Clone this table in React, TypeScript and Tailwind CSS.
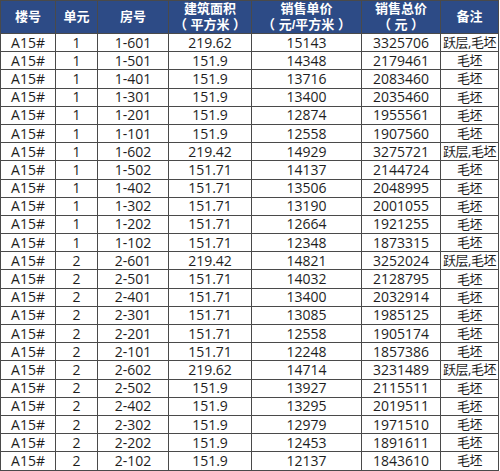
const rows: [string, string, string, string, string, string, string][] = [
  ["A15#", "1", "1-601", "219.62", "15143", "3325706", "跃层,毛坯"],
  ["A15#", "1", "1-501", "151.9", "14348", "2179461", "毛坯"],
  ["A15#", "1", "1-401", "151.9", "13716", "2083460", "毛坯"],
  ["A15#", "1", "1-301", "151.9", "13400", "2035460", "毛坯"],
  ["A15#", "1", "1-201", "151.9", "12874", "1955561", "毛坯"],
  ["A15#", "1", "1-101", "151.9", "12558", "1907560", "毛坯"],
  ["A15#", "1", "1-602", "219.42", "14929", "3275721", "跃层,毛坯"],
  ["A15#", "1", "1-502", "151.71", "14137", "2144724", "毛坯"],
  ["A15#", "1", "1-402", "151.71", "13506", "2048995", "毛坯"],
  ["A15#", "1", "1-302", "151.71", "13190", "2001055", "毛坯"],
  ["A15#", "1", "1-202", "151.71", "12664", "1921255", "毛坯"],
  ["A15#", "1", "1-102", "151.71", "12348", "1873315", "毛坯"],
  ["A15#", "2", "2-601", "219.42", "14821", "3252024", "跃层,毛坯"],
  ["A15#", "2", "2-501", "151.71", "14032", "2128795", "毛坯"],
  ["A15#", "2", "2-401", "151.71", "13400", "2032914", "毛坯"],
  ["A15#", "2", "2-301", "151.71", "13085", "1985125", "毛坯"],
  ["A15#", "2", "2-201", "151.71", "12558", "1905174", "毛坯"],
  ["A15#", "2", "2-101", "151.71", "12248", "1857386", "毛坯"],
  ["A15#", "2", "2-602", "219.62", "14714", "3231489", "跃层,毛坯"],
  ["A15#", "2", "2-502", "151.9", "13927", "2115511", "毛坯"],
  ["A15#", "2", "2-402", "151.9", "13295", "2019511", "毛坯"],
  ["A15#", "2", "2-302", "151.9", "12979", "1971510", "毛坯"],
  ["A15#", "2", "2-202", "151.9", "12453", "1891611", "毛坯"],
  ["A15#", "2", "2-102", "151.9", "12137", "1843610", "毛坯"],
]

const cell = "border-[1.5px] border-[#4a4a4a]"

export default function App() {
  return (
    <div
      className="w-[500px] h-[471px] overflow-hidden bg-white"
      style={{ fontFamily: '"Open Sans", "Noto Sans CJK SC", sans-serif' }}
    >
      <table className="border-collapse table-fixed w-[498px] text-[14px] text-[#1e1e1e] text-center leading-none">
        <colgroup>
          <col className="w-[55px]" />
          <col className="w-[42px]" />
          <col className="w-[71px]" />
          <col className="w-[83px]" />
          <col className="w-[110px]" />
          <col className="w-[79px]" />
          <col className="w-[58px]" />
        </colgroup>
        <thead>
          <tr
            className="h-[33px] bg-[#2d4b86] text-white font-bold text-[13px] leading-[16px]"
            style={{ fontFamily: '"Liberation Sans", "Noto Sans CJK SC", sans-serif' }}
          >
            <th className={`${cell} p-0`}>楼号</th>
            <th className={`${cell} p-0`}>单元</th>
            <th className={`${cell} p-0`}>房号</th>
            <th className={`${cell} p-0`}>
              <div>建筑面积</div>
              <div>（ 平方米 ）</div>
            </th>
            <th className={`${cell} p-0`}>
              <div>销售单价</div>
              <div>（ 元/平方米 ）</div>
            </th>
            <th className={`${cell} p-0`}>
              <div>销售总价</div>
              <div>（ 元 ）</div>
            </th>
            <th className={`${cell} p-0`}>备注</th>
          </tr>
        </thead>
        <tbody>
          {rows.map((r) => (
            <tr key={r[2]} className="h-[18.2px]">
              {r.map((c, i) => (
                <td
                  key={i}
                  className={`${cell} p-0 whitespace-nowrap ${i === 6 ? "text-[13px] tracking-[-0.5px]" : ""}`}
                >
                  {c}
                </td>
              ))}
            </tr>
          ))}
        </tbody>
      </table>
    </div>
  )
}
